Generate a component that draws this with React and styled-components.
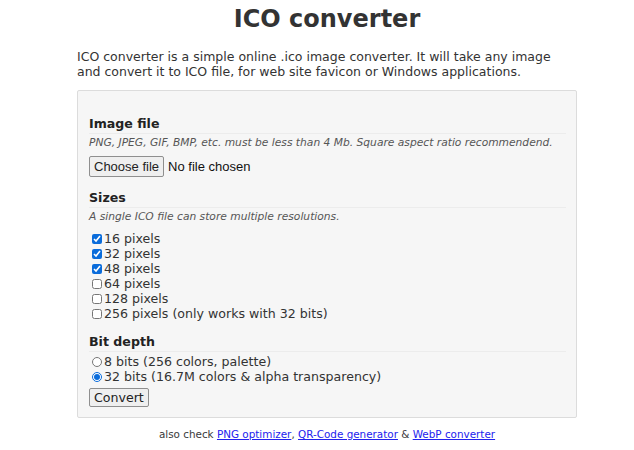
import React from 'react'
import styled, { createGlobalStyle } from 'styled-components'

const Global = createGlobalStyle`
  html, body {
    margin: 0;
    background: #fff;
  }
  body {
    font-family: "DejaVu Sans", Verdana, sans-serif;
    color: #333;
  }
`

const Page = styled.div`
  width: 500px;
  margin: 0 auto;
  padding-left: 20px;
`

const Title = styled.h1`
  margin: 0;
  padding-top: 4px;
  text-align: center;
  font-size: 24px;
  line-height: 30px;
  font-weight: bold;
  color: #333;
`

const Intro = styled.p`
  margin: 15px 0 11px;
  font-size: 12.5px;
  line-height: 15px;
`

const Box = styled.form`
  background: #f6f6f6;
  border: 1px solid #dcdcdc;
  border-radius: 2px;
  padding: 25px 10px 10px 11px;
`

const Section = styled.div`
  margin-bottom: 13px;
  &:last-child {
    margin-bottom: 0;
  }
`

const Heading = styled.h3`
  margin: 0;
  font-size: 12.6px;
  line-height: 15px;
  font-weight: bold;
  color: #222;
  border-bottom: 1px solid #ececec;
  padding-bottom: 2px;
`

const Hint = styled.div`
  font-size: 10.7px;
  line-height: 13px;
  font-style: italic;
  white-space: nowrap;
  color: #555;
  margin: 2px 0 ${p => p.after || 7}px;
`

const FileRow = styled.div`
  display: flex;
  align-items: center;
  font-family: "Liberation Sans", Arial, sans-serif;
  font-size: 13px;
  color: #111;
`

const Button = styled.button`
  font-family: ${p => (p.sans ? '"Liberation Sans", Arial, sans-serif' : '"DejaVu Sans", Verdana, sans-serif')};
  font-size: ${p => (p.sans ? '13px' : '12.6px')};
  height: ${p => (p.sans ? '21px' : '19px')};
  padding: 0 4px;
  margin: ${p => (p.sans ? '0 4px 0 0' : '4px 0 0')};
  color: #222;
  background: #efefef;
  border: 1px solid #8f8f8f;
  border-radius: 2px;
`

const Options = styled.div`
  display: flex;
  flex-direction: column;
  padding-left: 3px;
  margin-top: ${p => p.top || 0}px;
`

const Option = styled.label`
  display: flex;
  align-items: center;
  font-size: 12.6px;
  line-height: 15px;
  color: #333;
`

const Tick = styled.input`
  width: 10px;
  height: 10px;
  margin: 0 2px 0 0;
  accent-color: #0a6cdb;
`

const Footer = styled.div`
  text-align: center;
  font-size: 10.4px;
  line-height: 13px;
  color: #3a3a3a;
  margin-top: 10px;
  a {
    color: #2222ee;
  }
`

const sizes = [
  ['16 pixels', true],
  ['32 pixels', true],
  ['48 pixels', true],
  ['64 pixels', false],
  ['128 pixels', false],
  ['256 pixels (only works with 32 bits)', false],
]

export default function App() {
  return (
    <>
      <Global />
      <Page>
        <Title>ICO converter</Title>
        <Intro>
          ICO converter is a simple online .ico image converter. It will take any image and convert it to ICO file, for web site favicon or Windows applications.
        </Intro>
        <Box onSubmit={e => e.preventDefault()}>
          <Section>
            <Heading>Image file</Heading>
            <Hint>PNG, JPEG, GIF, BMP, etc. must be less than 4 Mb. Square aspect ratio recommendend.</Hint>
            <FileRow>
              <Button type="button" sans>Choose file</Button>
              No file chosen
            </FileRow>
          </Section>
          <Section>
            <Heading>Sizes</Heading>
            <Hint after={8}>A single ICO file can store multiple resolutions.</Hint>
            <Options>
              {sizes.map(([label, on]) => (
                <Option key={label}>
                  <Tick type="checkbox" defaultChecked={on} />
                  {label}
                </Option>
              ))}
            </Options>
          </Section>
          <Section>
            <Heading>Bit depth</Heading>
            <Options top={2}>
              <Option>
                <Tick type="radio" name="bpp" />
                8 bits (256 colors, palette)
              </Option>
              <Option>
                <Tick type="radio" name="bpp" defaultChecked />
                32 bits (16.7M colors &amp; alpha transparency)
              </Option>
            </Options>
            <Button type="submit">Convert</Button>
          </Section>
        </Box>
        <Footer>
          also check <a href="#">PNG optimizer</a>, <a href="#">QR-Code generator</a> &amp; <a href="#">WebP converter</a>
        </Footer>
      </Page>
    </>
  )
}
